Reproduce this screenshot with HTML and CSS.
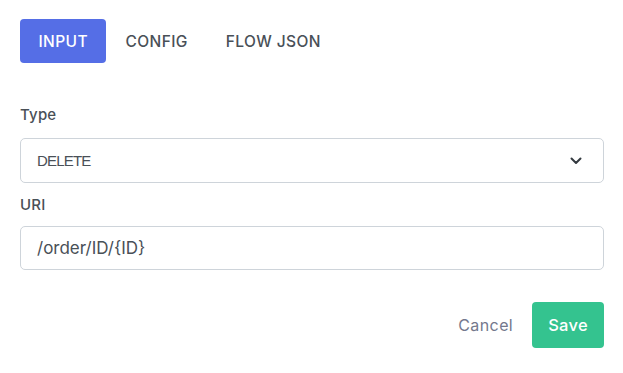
FILE: index.html
```html
<!DOCTYPE html>
<html>
<head>
<meta charset="utf-8">
<link rel="stylesheet" href="styles.css">
</head>
<body>
<div class="panel">
  <div class="tabs">
    <div class="tab active">INPUT</div>
    <div class="tab">CONFIG</div>
    <div class="tab">FLOW JSON</div>
  </div>
  <div class="field first">
    <div class="label">Type</div>
    <div class="select">
      <span>DELETE</span>
      <svg class="chev" width="12" height="8" viewBox="0 0 12 8"><path d="M1.5 1.5 L6 6 L10.5 1.5" fill="none" stroke="#343a40" stroke-width="2" stroke-linecap="round" stroke-linejoin="round"/></svg>
    </div>
  </div>
  <div class="field">
    <div class="label">URI</div>
    <div class="input">/order/ID/{ID}</div>
  </div>
  <div class="actions">
    <span class="cancel">Cancel</span>
    <span class="save">Save</span>
  </div>
</div>
</body>
</html>
```
FILE: styles.css
```css
html, body { margin: 0; padding: 0; background: #fff; }
body { font-family: Inter, "Open Sans", sans-serif; color: #495057; }
.panel { padding: 19px 19px 0 20px; }
.tabs { display: flex; }
.tab {
  height: 44px; padding: 0 19px; display: flex; align-items: center;
  font-size: 15.5px; font-weight: 500; letter-spacing: 0.4px; color: #495057; border-radius: 4px;
}
.tab.active { background: #556ee6; color: #fff; padding: 0 18.5px; }
.field { display: flex; flex-direction: column; }
.field.first { margin-top: 41px; }
.label { font-size: 15px; font-weight: 500; color: #495057; line-height: 22px; margin-bottom: 12px; letter-spacing: 0.2px; }
.field + .field .label { margin-top: 11px; margin-bottom: 10px; }
.select, .input {
  height: 43px; border: 1px solid #ced4da; border-radius: 5px;
  display: flex; align-items: center; box-sizing: content-box; color: #495057;
}
.select {
  padding: 0 21px 0 16px; justify-content: space-between; font-size: 15px;
  font-family: "Liberation Sans", "Noto Sans", sans-serif; letter-spacing: -0.8px;
}
.input { padding: 0 16px; font-size: 17px; height: 42px; }
.actions { display: flex; justify-content: flex-end; align-items: center; margin-top: 32px; gap: 19px; }
.cancel { font-size: 16px; letter-spacing: 0.4px; color: #74788d; }
.save { background: #34c38f; color: #fff; height: 46px; padding: 0 16px; display: flex; align-items: center; font-size: 16.5px; font-weight: 500; letter-spacing: 0.3px; border-radius: 4px; }
```
